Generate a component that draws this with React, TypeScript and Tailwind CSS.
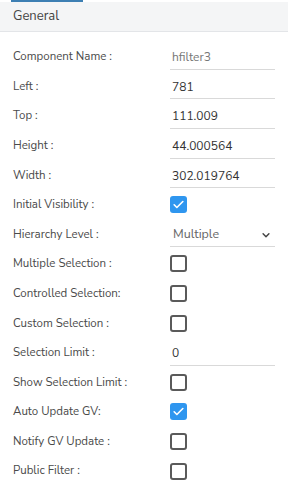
import React from "react";

type Row =
  | { label: string; kind: "input"; value: string; muted?: boolean }
  | { label: string; kind: "check"; checked: boolean }
  | { label: string; kind: "select"; value: string };

const rows: Row[] = [
  { label: "Component Name :", kind: "input", value: "hfilter3", muted: true },
  { label: "Left :", kind: "input", value: "781" },
  { label: "Top :", kind: "input", value: "111.009" },
  { label: "Height :", kind: "input", value: "44.000564" },
  { label: "Width :", kind: "input", value: "302.019764" },
  { label: "Initial Visibility :", kind: "check", checked: true },
  { label: "Hierarchy Level :", kind: "select", value: "Multiple" },
  { label: "Multiple Selection :", kind: "check", checked: false },
  { label: "Controlled Selection:", kind: "check", checked: false },
  { label: "Custom Selection :", kind: "check", checked: false },
  { label: "Selection Limit :", kind: "input", value: "0" },
  { label: "Show Selection Limit :", kind: "check", checked: false },
  { label: "Auto Update GV:", kind: "check", checked: true },
  { label: "Notify GV Update :", kind: "check", checked: false },
  { label: "Public Filter :", kind: "check", checked: false },
];

function Check({ checked }: { checked: boolean }) {
  if (checked) {
    return (
      <div className="w-[17px] h-[17px] rounded-[3px] bg-[#2f96ef] flex items-center justify-center">
        <svg width="13" height="13" viewBox="0 0 24 24" fill="none">
          <path d="M4 12.5l5 5L20 6.5" stroke="white" strokeWidth="3" strokeLinecap="round" strokeLinejoin="round" />
        </svg>
      </div>
    );
  }
  return <div className="w-[17px] h-[17px] rounded-[3px] border-2 border-[#5a5a5a] bg-white" />;
}

export default function App() {
  return (
    <div className="w-[288px] h-[498px] bg-white overflow-hidden" style={{ fontFamily: "'Nunito Sans', Lato, 'Open Sans', sans-serif" }}>
      <div className="h-[2px] w-full flex">
        <div className="ml-[11px] w-[72px] h-[2px] bg-[#3d7fb3]" />
      </div>
      <div className="h-[30px] bg-[#f4f5f6] border-b border-[#e3e5e8] flex items-center pl-[13px] text-[13px] text-[#444]">
        General
      </div>
      <div className="pt-[10px]">
        {rows.map((r, i) => (
          <div key={i} className="h-[29.6px] flex items-center">
            <div className="w-[170px] shrink-0 pl-[13px] text-[11.5px] text-[#4a4a4a]">{r.label}</div>
            <div className="w-[105px]">
              {r.kind === "input" && (
                <div className={`h-[26px] border-b border-[#d9d9d9] flex items-center pl-[2px] pt-[2px] text-[12px] ${r.muted ? "text-[#777]" : "text-[#333]"}`}>
                  {r.value}
                </div>
              )}
              {r.kind === "select" && (
                <div className="h-[26px] border-b border-[#d9d9d9] flex items-center justify-between pl-[3px] pr-[4px] pt-[2px] text-[12.5px] text-[#666]">
                  <span>{r.value}</span>
                  <svg width="10" height="10" viewBox="0 0 24 24" fill="none">
                    <path d="M5 9l7 7 7-7" stroke="#444" strokeWidth="3.5" strokeLinecap="round" strokeLinejoin="round" />
                  </svg>
                </div>
              )}
              {r.kind === "check" && <Check checked={r.checked} />}
            </div>
          </div>
        ))}
      </div>
    </div>
  );
}
